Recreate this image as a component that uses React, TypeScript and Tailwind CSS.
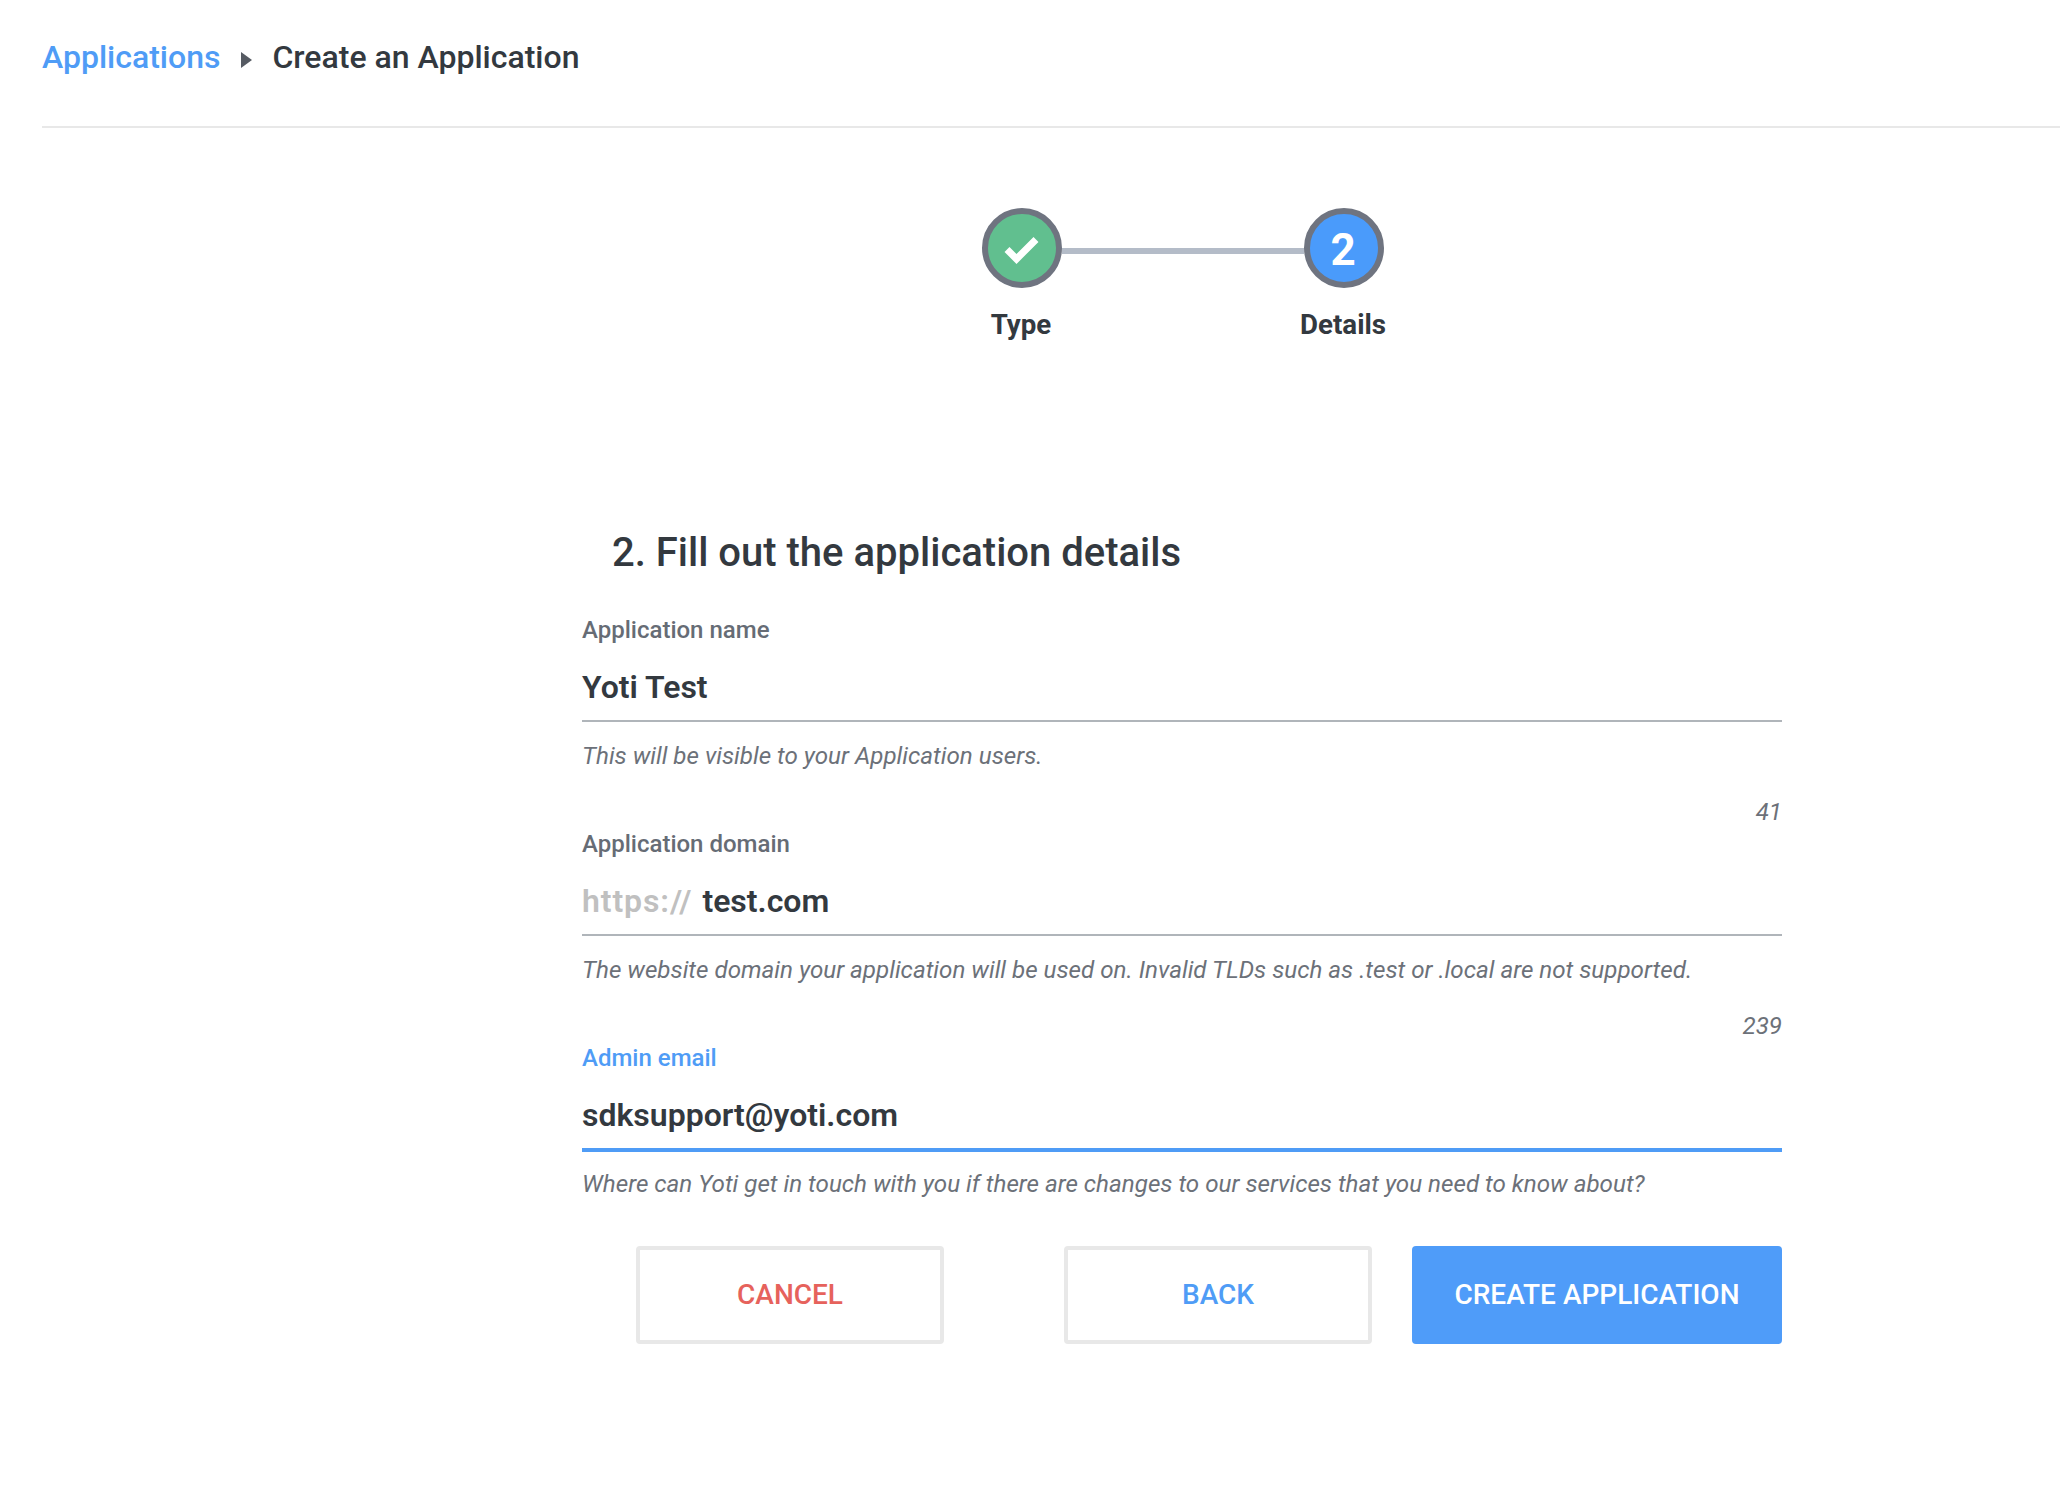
import React from "react";

type FieldProps = {
  label: string;
  value: string;
  helper: string;
  count?: string;
  prefix?: string;
  active?: boolean;
};

function Field({ label, value, helper, count, prefix, active }: FieldProps) {
  return (
    <div className="flex flex-col">
      <div
        className={`h-[30px] text-[24px] leading-[30px] font-medium ${
          active ? "text-[#4f9cf6]" : "text-[#666c75]"
        }`}
      >
        {label}
      </div>
      <div className="mt-[18px] flex h-[48px] items-center text-[32px] leading-[48px] font-semibold text-[#33393f]">
        {prefix ? <span className="mr-[10px] font-semibold tracking-[0.9px] text-[#c0c0c0]">{prefix}</span> : null}
        <span>{value}</span>
      </div>
      <div className={active ? "mt-[9px] h-[4px] bg-[#4f9cf6]" : "mt-[9px] h-[2px] bg-[#b0b5ba]"} />
      <div className={`text-[24.2px] leading-[30px] text-[#6c7179] italic ${active ? "mt-[17px]" : "mt-[19px]"}`}>
        {helper}
      </div>
      {count ? (
        <div className="mt-[26px] h-[30px] text-right text-[24.2px] leading-[30px] text-[#6c7179] italic">{count}</div>
      ) : null}
    </div>
  );
}

function Step({ label, children, fill }: { label: string; children: React.ReactNode; fill: string }) {
  return (
    <div className="flex w-[80px] flex-col items-center">
      <div className={`flex h-[80px] w-[80px] items-center justify-center rounded-full border-[6px] border-[#6f7480] ${fill}`}>
        {children}
      </div>
      <div className="mt-[21px] pr-[2px] text-[27.7px] leading-[32px] font-bold whitespace-nowrap text-[#33393f]">{label}</div>
    </div>
  );
}

function OutlineButton({ label, color, className }: { label: string; color: string; className: string }) {
  return (
    <button className={`flex h-[98px] w-[308px] items-center justify-center rounded-[4px] border-[4px] border-[#e8e8e8] bg-white text-[28px] font-medium ${color} ${className}`}>
      {label}
    </button>
  );
}

export default function App() {
  return (
    <div className="min-h-[1500px] bg-white font-['Roboto',sans-serif]">
      <header className="ml-[42px] flex h-[128px] items-start border-b-2 border-[#e8e8e8] pt-[37px]">
        <div className="flex h-[40px] items-center text-[32px] leading-[40px] font-medium">
          <span className="text-[#4f9cf6]">Applications</span>
          <svg className="mt-[6px] mr-[20px] ml-[21px]" width="11" height="16" viewBox="0 0 11 16">
            <polygon points="0,0 11,8 0,16" fill="#565b63" />
          </svg>
          <span className="text-[#33393f]">Create an Application</span>
        </div>
      </header>

      <main className="ml-[582px] w-[1200px]">
        <div className="mt-[80px] ml-[400px] flex">
          <div className="flex w-[402px] items-start">
            <Step label="Type" fill="bg-[#61bf8f]">
              <svg width="68" height="68" viewBox="0 0 68 68" className="shrink-0">
                <polyline points="19,35.5 28.5,45 48,25.5" fill="none" stroke="#ffffff" strokeWidth="7" />
              </svg>
            </Step>
            <div className="mt-[40px] h-[6px] flex-1 bg-[#b4bcc8]" />
            <Step label="Details" fill="bg-[#4a9bfb]">
              <span className="pt-[3px] pr-[2px] text-[44px] leading-none font-bold text-white">2</span>
            </Step>
          </div>
        </div>

        <h1 className="mt-[187px] ml-[30px] text-[40px] leading-[50px] font-medium text-[#33393f]">
          2. Fill out the application details
        </h1>

        <div className="mt-[37px] flex flex-col gap-[2px]">
          <Field
            label="Application name"
            value="Yoti Test"
            helper="This will be visible to your Application users."
            count="41"
          />
          <Field
            label="Application domain"
            value="test.com"
            prefix="https://"
            helper="The website domain your application will be used on. Invalid TLDs such as .test or .local are not supported."
            count="239"
          />
          <Field
            label="Admin email"
            value="sdksupport@yoti.com"
            helper="Where can Yoti get in touch with you if there are changes to our services that you need to know about?"
            active
          />
        </div>

        <div className="mt-[47px] flex items-stretch justify-end">
          <OutlineButton label="CANCEL" color="text-[#e6625c]" className="mr-[120px]" />
          <OutlineButton label="BACK" color="text-[#4f9cf6]" className="mr-[40px]" />
          <button className="h-[98px] w-[370px] rounded-[4px] bg-[#4f9cf9] text-[28px] font-medium text-white">
            CREATE APPLICATION
          </button>
        </div>
      </main>
    </div>
  );
}
